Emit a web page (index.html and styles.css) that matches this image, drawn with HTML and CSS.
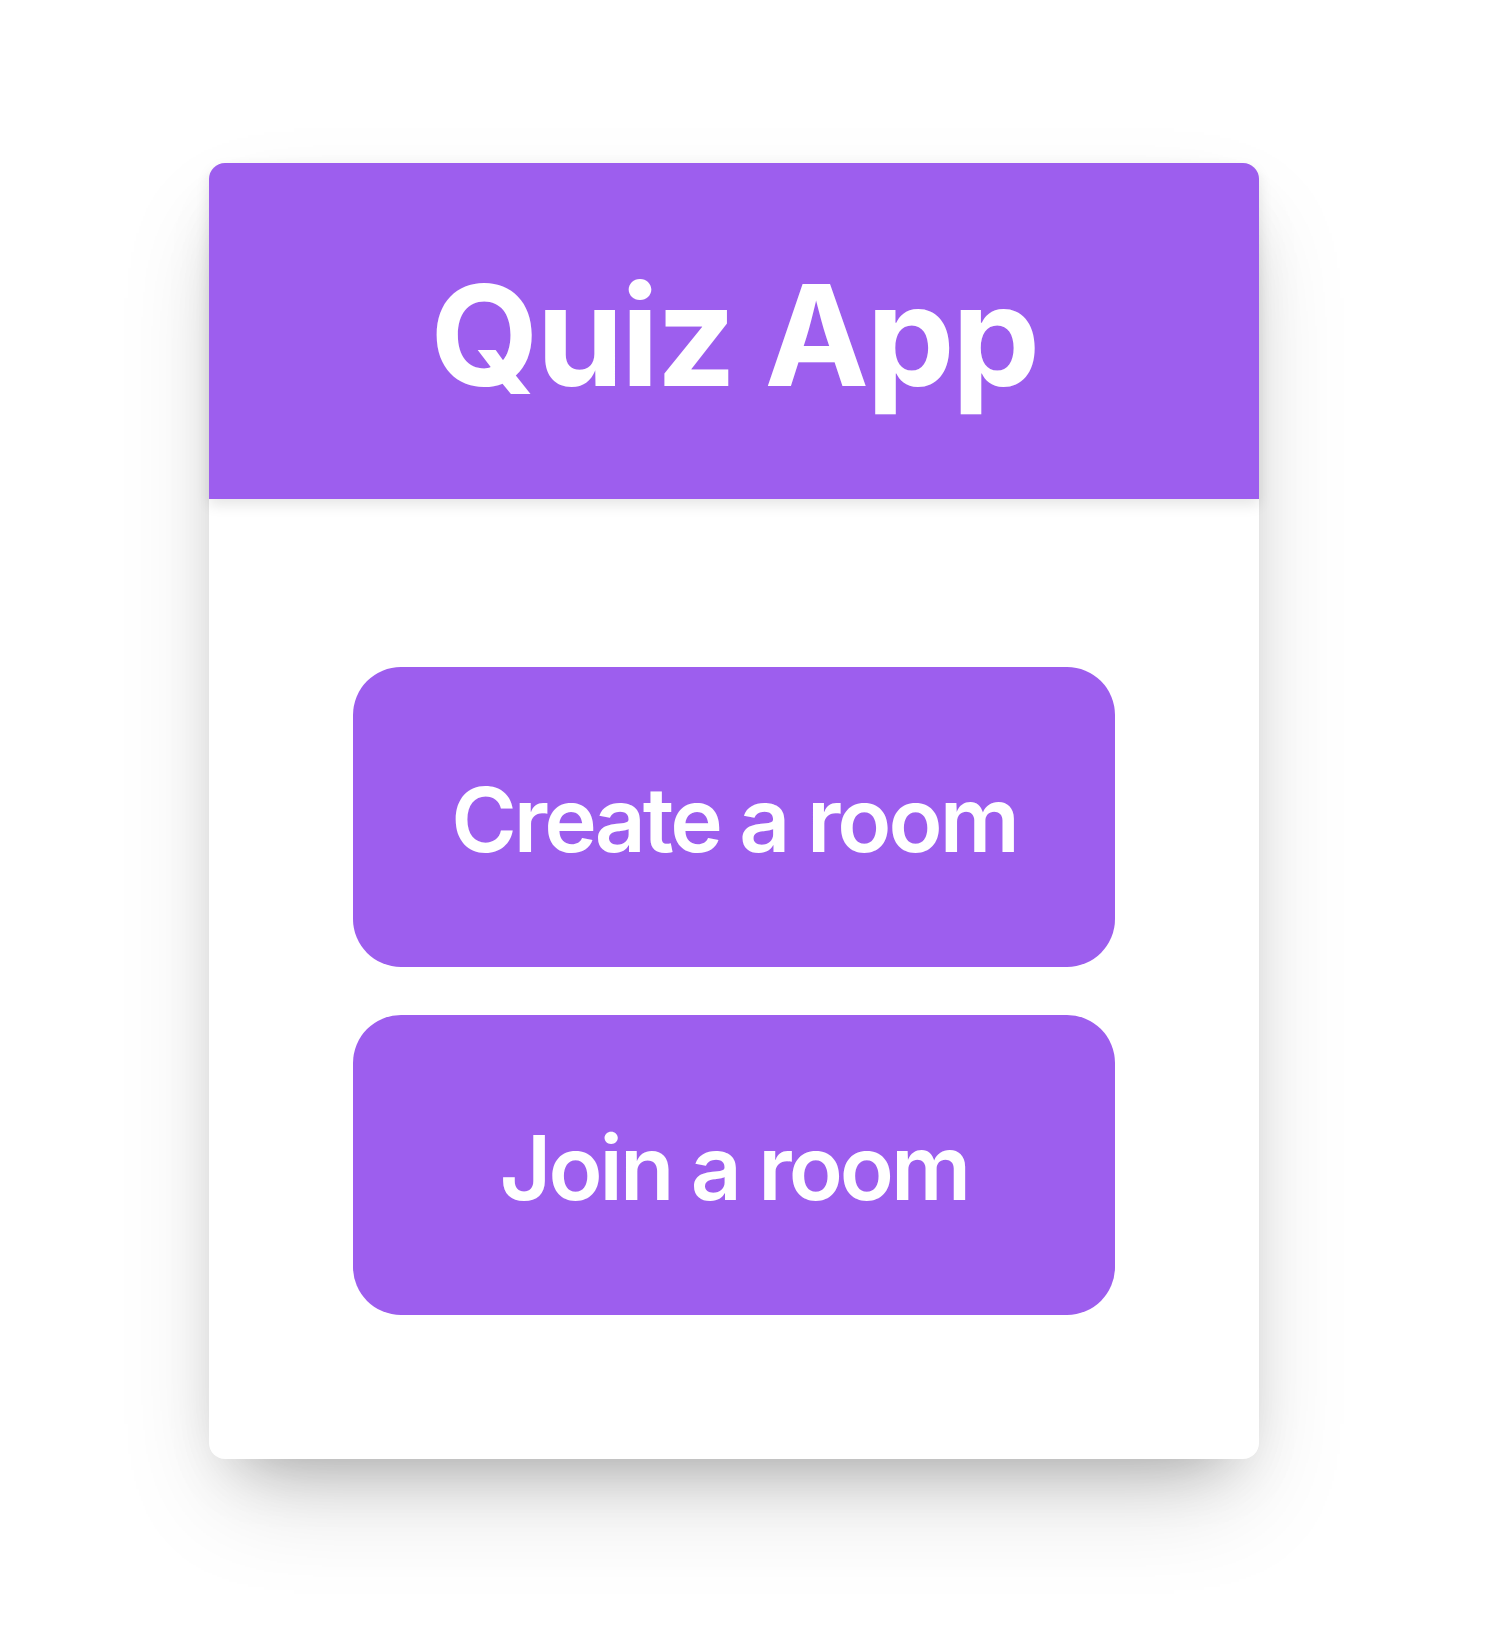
FILE: index.html
```html
<!DOCTYPE html>
<html lang="en">
<head>
<meta charset="utf-8">
<title>Quiz App</title>
<link rel="stylesheet" href="styles.css">
</head>
<body>
<main class="page">
  <section class="card">
    <header class="card-header">
      <h1 class="title">Quiz App</h1>
    </header>
    <div class="card-body">
      <button class="action" type="button">Create a room</button>
      <button class="action" type="button">Join a room</button>
    </div>
  </section>
</main>
</body>
</html>
```

FILE: styles.css
```css
html, body {
  margin: 0;
  padding: 0;
  background: #ffffff;
}

body {
  font-family: Inter, "Noto Sans", "Liberation Sans", sans-serif;
}

.page {
  padding: 163px 0 0 209px;
  min-height: 1626px;
  box-sizing: border-box;
}

.card {
  width: 1050px;
  background: #ffffff;
  border-radius: 16px;
  box-shadow: 0 50px 100px -20px rgba(0, 0, 0, 0.17), 0 30px 60px -30px rgba(0, 0, 0, 0.28);
  display: flex;
  flex-direction: column;
}

.card-header {
  height: 336px;
  box-sizing: border-box;
  padding-top: 8px;
  background: #9d5eee;
  border-radius: 16px 16px 0 0;
  display: flex;
  align-items: center;
  justify-content: center;
  box-shadow: 0 6px 14px rgba(0, 0, 0, 0.1);
  position: relative;
  z-index: 1;
}

.title {
  margin: 0;
  color: #ffffff;
  font-size: 140px;
  font-weight: 700;
  letter-spacing: -2.6px;
  line-height: 1;
}

.card-body {
  padding: 168px 144px 144px;
  display: flex;
  flex-direction: column;
  gap: 48px;
}

.action {
  height: 300px;
  border: none;
  border-radius: 48px;
  background: #9d5eee;
  color: #ffffff;
  font-family: Inter, "Noto Sans", "Liberation Sans", sans-serif;
  font-size: 89px;
  font-weight: 600;
  letter-spacing: -3px;
  cursor: pointer;
  padding: 4px 0 0;
}
```
